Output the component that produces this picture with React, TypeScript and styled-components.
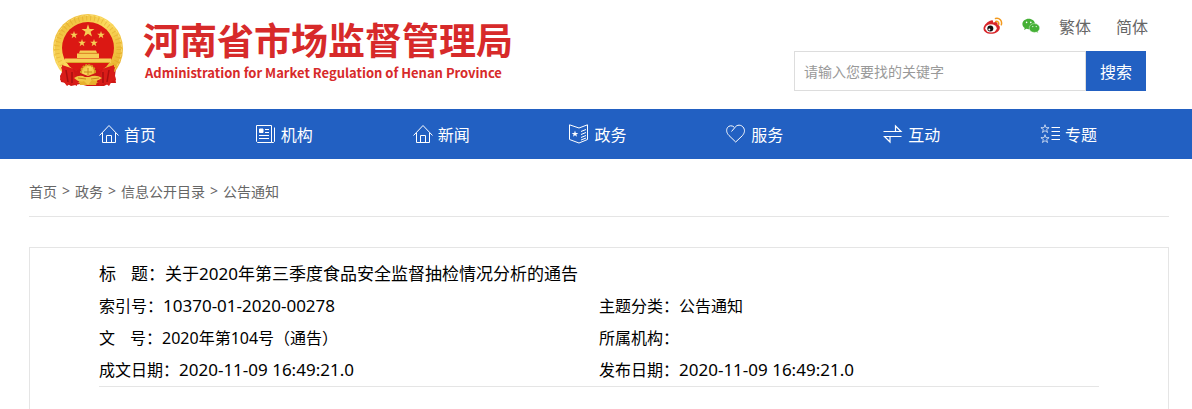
import React from "react";
import styled, { createGlobalStyle } from "styled-components";

const GlobalStyle = createGlobalStyle`
  * { box-sizing: border-box; }
  body {
    margin: 0;
    background: #fff;
    color: #000;
    font-family: "Noto Sans", "Noto Sans CJK SC", sans-serif;
    font-size: 16px;
  }
  a { color: inherit; text-decoration: none; }
`;

const BLUE = "#2260c2";

const Header = styled.header`
  display: flex;
  justify-content: space-between;
  height: 109px;
  padding: 0 44px 0 49px;
`;

const Brand = styled.a`
  display: flex;
  align-items: flex-start;
  gap: 14px;
  padding-top: 10px;
  color: #d72a2a;
`;

const BrandText = styled.div`
  display: flex;
  flex-direction: column;
  padding-top: 7px;
  font-family: "Noto Sans CJK SC", sans-serif;
  font-weight: 700;
  white-space: nowrap;
`;

const BrandName = styled.h1`
  margin: 0;
  font-size: 37px;
  line-height: 44px;
`;

const BrandEnglish = styled.span`
  padding-left: 2px;
  font-size: 13px;
  line-height: 24px;
`;

const Tools = styled.div`
  display: flex;
  flex-direction: column;
  align-items: flex-end;
`;

const TopLinks = styled.nav`
  display: flex;
  align-items: center;
  height: 51px;
  color: #666;

  a { display: flex; }
`;

const SocialLink = styled.a`
  margin-right: 19px;
`;

const LanguageLink = styled.a`
  & + & { margin-left: 25px; }
`;

const Search = styled.form`
  display: flex;
  height: 40px;
  margin-right: 2px;
`;

const SearchInput = styled.input`
  width: 292px;
  padding: 0 9px;
  border: 1px solid #ddd;
  border-radius: 0;
  background: #fff;
  font: inherit;
  font-size: 14px;
  outline: none;

  &::placeholder { color: #999; opacity: 1; }
`;

const SearchButton = styled.button`
  width: 60px;
  padding: 0;
  border: 0;
  background: ${BLUE};
  color: #fff;
  font: inherit;
`;

const MainNav = styled.nav`
  padding: 0 45px 0 49px;
  background: ${BLUE};
  color: #fff;

  ul {
    display: grid;
    grid-template-columns: repeat(7, 1fr);
    margin: 0;
    padding: 0;
    list-style: none;
  }
`;

const NavLink = styled.a`
  display: flex;
  align-items: center;
  justify-content: center;
  gap: 4px;
  height: 50px;
`;

const Content = styled.main`
  padding: 0 23px 0 29px;
`;

const Breadcrumb = styled.nav`
  display: flex;
  align-items: center;
  gap: 5px;
  height: 58px;
  padding-top: 6px;
  border-bottom: 1px solid #e5e5e5;
  color: #666;
  font-size: 14px;
`;

const Article = styled.article`
  min-height: 162px;
  margin-top: 30px;
  padding: 10px 69px 0;
  border: 1px solid #e5e5e5;
  border-bottom: 0;
`;

const Details = styled.dl`
  display: grid;
  grid-template-columns: 1fr 1fr;
  margin: 0;
  border-bottom: 1px solid #e5e5e5;
`;

const Detail = styled.div<{ $title?: boolean }>`
  display: flex;
  grid-column: ${(p) => (p.$title ? "1 / -1" : "auto")};
  font-size: ${(p) => (p.$title ? 17 : 16)}px;
  line-height: 32px;
  white-space: nowrap;

  dd { margin: 0; }
`;

const Label = styled.dt`
  display: flex;
  gap: 15px;
`;

const Value = styled.dd<{ $numeric?: boolean }>`
  font-size: ${(p) => (p.$numeric ? "17px" : "inherit")};
`;

const STAR = "M0-10 2.3-3.1 9.5-3.1 3.8 1.2 5.9 8.1 0 3.9-5.9 8.1-3.8 1.2-9.5-3.1-2.3-3.1Z";

const Emblem = () => (
  <svg width="80" height="80" viewBox="0 0 80 80" aria-hidden="true">
    <defs>
      <linearGradient id="gold" x1="0" y1="0" x2="1" y2="1">
        <stop offset="0" stopColor="#e9b32c" />
        <stop offset=".45" stopColor="#fbd95c" />
        <stop offset="1" stopColor="#e3a51e" />
      </linearGradient>
    </defs>
    <path d="M12 49C15 56 16 58 11 66L12 72 17 73 22 76 31 74 38 76 47 76 55 76 61 73 67 73 66 66 67 58 66 49Z" fill="#cf1715" />
    <circle cx="39" cy="39" r="35" fill="url(#gold)" />
    <circle cx="39" cy="39" r="31" fill="none" stroke="#d69a1e" strokeWidth="5" strokeDasharray="1 3" opacity=".4" />
    <circle cx="39" cy="39" r="33.5" fill="none" stroke="#fff0a0" strokeWidth="1" strokeDasharray="3 2" opacity=".5" />
    <circle cx="39" cy="38" r="26" fill="#db1813" />
    <g fill="#f6ce55">
      <path d={STAR} transform="translate(39 21) scale(.68)" />
      <path d={STAR} transform="translate(25 25) scale(.4)" />
      <path d={STAR} transform="translate(52 25) scale(.4)" />
      <path d={STAR} transform="translate(33 33) scale(.4)" />
      <path d={STAR} transform="translate(45 33) scale(.4)" />
      <path d="M31 40.500H47L48 43H30ZM28 43.500H50V48H28ZM16 48.500H62V53H16Z" />
    </g>
    <path d="M30 43.200H48M17 52.500H61" stroke="#d89e25" strokeWidth=".8" />
    <path d="M12 57C25 62 30 61 33 57Q39 53 45 57C49 61 56 61 66 57L64 66 50 72H28L15 66Z" fill="#cf1715" />
    <path d="M13 55 28 60 28 76 22 73 18 76 14 71 11 70 13 62Z" fill="#d91c18" />
    <path d="M65 55 50 60 50 76 56 73 60 76 63 71 67 70 65 62Z" fill="#d91c18" />
    <path d="M17 60 19 72M23 62V73M60 60 58 72M54 62V73" fill="none" stroke="#a80f0f" strokeWidth="1.500" />
    <path d="M29 68H49L47 75H31Z" fill="#e8b02c" />
    <circle cx="39" cy="62" r="7" fill="url(#gold)" stroke="#d59b1e" strokeWidth="2" strokeDasharray="2 1" />
    <path d="M24 59Q32 64 39 66 46 64 54 59L51 65Q45 70 39 69 31 69 26 65Z" fill="#cf1715" />
    <path d="M25 68Q31 64 36 67L40 67Q47 64 53 68 48 72 43 70L39 75 35 71Q30 73 25 68Z" fill="#f2c747" />
    <path d="M29 68 37 69M50 68 42 69M35 62H43M39 58V65" stroke="#c8871b" strokeWidth="1" />
  </svg>
);

const Weibo = () => (
  <svg width="20" height="18" viewBox="0 0 20 18" aria-hidden="true">
    <path d="M8.300 3.500C10 3 10.300 4 10 5.500 13 4.300 15.200 5 14.500 7.500 16.500 8.200 17 9.500 16.800 11.200 16.300 14.600 12.300 16.800 8 16.800 3.700 16.800.5 14.700.5 11.500.5 8.200 5.200 3.900 8.300 3.500Z" fill="#d8252a" />
    <ellipse cx="8" cy="11.300" rx="5.700" ry="4.100" fill="#fff" />
    <circle cx="7.300" cy="11.500" r="3" fill="#111" />
    <circle cx="6.300" cy="12.400" r="1" fill="#fff" />
    <path d="M12.500 1.500C16.500.5 19.500 4 18.300 7.700M12.700 4.400C14.800 4 16.200 5.400 15.700 7.300" fill="none" stroke="#f39a1e" strokeWidth="1.500" strokeLinecap="round" />
  </svg>
);

const Wechat = () => (
  <svg width="18" height="16" viewBox="0 0 18 16" aria-hidden="true">
    <path d="M6.700.8C3.200.8.4 3.100.4 6 .4 7.700 1.300 9.100 2.700 10L2.100 12 4.400 10.800Q5.500 11.200 6.700 11.200C10.200 11.200 13 8.900 13 6S10.200.8 6.700.8Z" fill="#45b035" />
    <path d="M12.400 5.600C9.500 5.600 7.200 7.500 7.200 10S9.500 14.400 12.400 14.400Q13.400 14.400 14.300 14.100L16.200 15.100 15.700 13.400C16.900 12.600 17.700 11.400 17.700 10 17.700 7.500 15.300 5.600 12.400 5.600Z" fill="#45b035" stroke="#fff" strokeWidth=".4" />
    <g fill="#fff">
      <circle cx="4.600" cy="4.400" r=".8" /><circle cx="8.800" cy="4.400" r=".8" />
      <circle cx="10.800" cy="8.600" r=".6" /><circle cx="14.200" cy="8.600" r=".6" />
    </g>
  </svg>
);

const iconShapes: Record<string, React.ReactNode> = {
  home: <path d="M.5 11.500 10 1.500 19.500 11.500M3.500 9V18.500H16.500V9M7.500 18.500V11.500H12.500V18.500" />,
  paper: (
    <>
      <path d="M.5 1.500H15.500V18.500H1.500L.5 17.500ZM15.500 18.500H17.500L18.500 17.500V3.500M9 5.500H13M9 8.500H13M3 11.500H13M3 14.500H13" />
      <path d="M3.500 5H7V8.500H3.500Z" fill="currentColor" />
    </>
  ),
  book: (
    <>
      <path d="M.5.8 10 4 18.500.8V15.500L10 19 .5 15.500ZM12 7.500 17 5.500M12 10.500 17 8.500M12 13.500 17 11.500M12 16 17 14" />
      <path d={STAR} transform="translate(6 10) scale(.35)" fill="currentColor" stroke="none" />
    </>
  ),
  heart: <path d="M5.500 7.500 8.500 4C11-.2 15.500 1 17 3 19.500 6 18.500 9 16.500 11.500L9.700 18 3 11.500C.5 9 0 6 1.500 3.500 3 1.500 6 1.200 8 3" />,
  exchange: <path d="M.5 7.500H18L12.500 2V7.500M18.500 12.500H1.500L7 18V12.500" strokeWidth="1.200" />,
  topics: (
    <>
      <path d="M11.500 3.500H20M11.500 7.500H20M11.500 11.500H20M11.500 15.500H20" />
      <path d={STAR} transform="translate(5 5) scale(.43)" strokeWidth="2" opacity=".8" />
      <path d={STAR} transform="translate(5 15) scale(.43)" strokeWidth="2" opacity=".8" />
    </>
  ),
};

const NavIcon = ({ name }: { name: string }) => (
  <svg width="21" height="20" viewBox="0 0 21 20" fill="none" stroke="currentColor" strokeWidth="1" aria-hidden="true">
    {iconShapes[name]}
  </svg>
);

const navItems = [
  ["首页", "home"], ["机构", "paper"], ["新闻", "home"], ["政务", "book"],
  ["服务", "heart"], ["互动", "exchange"], ["专题", "topics"],
];

const crumbs = ["首页", "政务", "信息公开目录", "公告通知"];

type DetailItem = { label: string[]; value: string; title?: boolean; numeric?: boolean };

const details: DetailItem[] = [
  { label: ["标", "题："], value: "关于2020年第三季度食品安全监督抽检情况分析的通告", title: true },
  { label: ["索引号："], value: "10370-01-2020-00278", numeric: true },
  { label: ["主题分类："], value: "公告通知" },
  { label: ["文", "号："], value: "2020年第104号（通告）" },
  { label: ["所属机构："], value: "" },
  { label: ["成文日期："], value: "2020-11-09 16:49:21.0", numeric: true },
  { label: ["发布日期："], value: "2020-11-09 16:49:21.0", numeric: true },
];

export default function App() {
  return (
    <>
      <GlobalStyle />
      <Header>
        <Brand href="#">
          <Emblem />
          <BrandText>
            <BrandName>河南省市场监督管理局</BrandName>
            <BrandEnglish>Administration for Market Regulation of Henan Province</BrandEnglish>
          </BrandText>
        </Brand>
        <Tools>
          <TopLinks>
            <SocialLink href="#" aria-label="微博"><Weibo /></SocialLink>
            <SocialLink href="#" aria-label="微信"><Wechat /></SocialLink>
            <LanguageLink href="#">繁体</LanguageLink>
            <LanguageLink href="#">简体</LanguageLink>
          </TopLinks>
          <Search onSubmit={(e) => e.preventDefault()}>
            <SearchInput type="text" aria-label="搜索" placeholder="请输入您要找的关键字" />
            <SearchButton type="submit">搜索</SearchButton>
          </Search>
        </Tools>
      </Header>
      <MainNav>
        <ul>
          {navItems.map(([text, icon]) => (
            <li key={text}>
              <NavLink href="#"><NavIcon name={icon} />{text}</NavLink>
            </li>
          ))}
        </ul>
      </MainNav>
      <Content>
        <Breadcrumb>
          {crumbs.map((text, i) => (
            <React.Fragment key={text}>
              {i > 0 && <span>&gt;</span>}
              <a href="#">{text}</a>
            </React.Fragment>
          ))}
        </Breadcrumb>
        <Article>
          <Details>
            {details.map((d) => (
              <Detail key={d.label.join("")} $title={d.title}>
                <Label>{d.label.map((part) => <span key={part}>{part}</span>)}</Label>
                <Value $numeric={d.numeric}>{d.value}</Value>
              </Detail>
            ))}
          </Details>
        </Article>
      </Content>
    </>
  );
}
